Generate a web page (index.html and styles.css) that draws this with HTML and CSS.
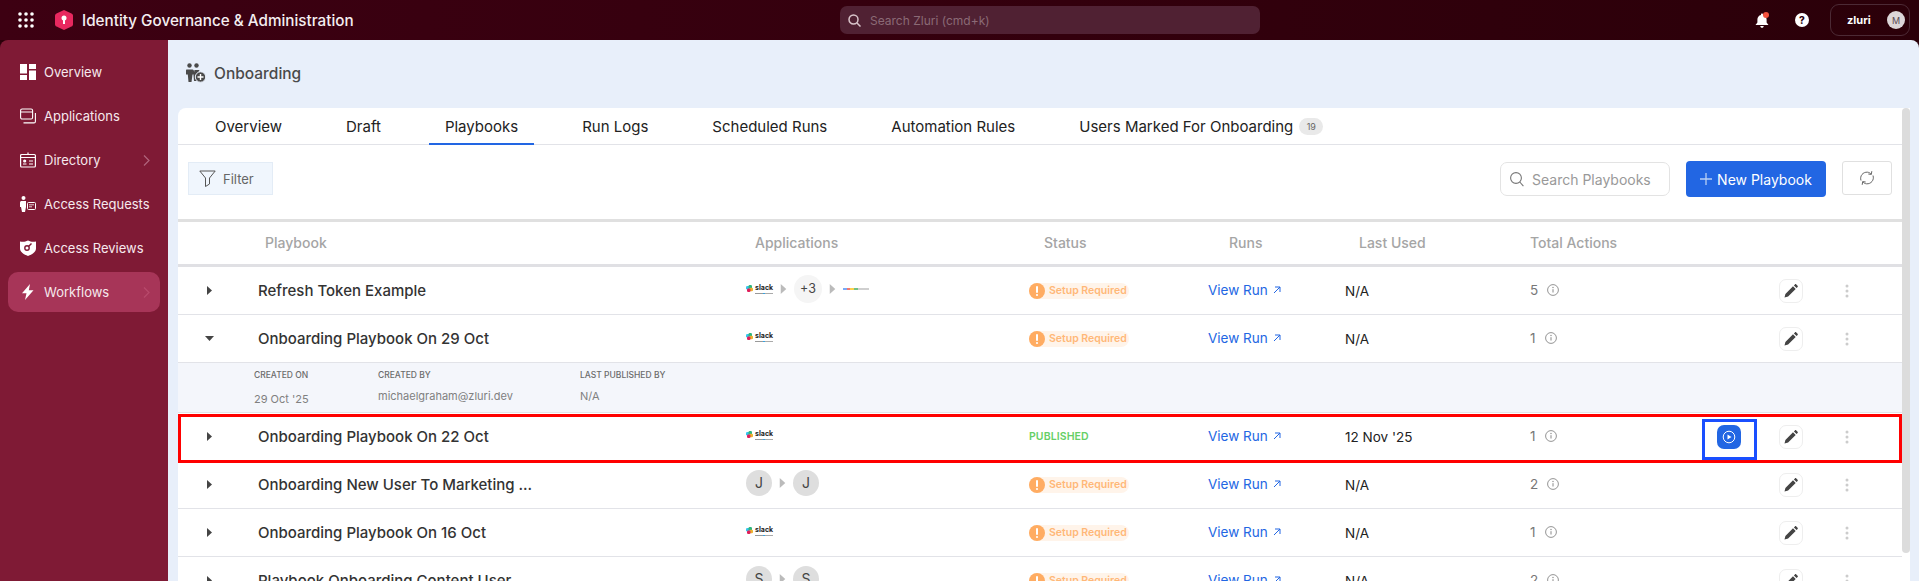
FILE: index.html
```html
<!DOCTYPE html>
<html lang="en">
<head>
<meta charset="utf-8">
<title>Onboarding</title>
<link rel="stylesheet" href="styles.css">
</head>
<body>
<svg class="sprite" aria-hidden="true">
  <symbol id="tri" viewBox="0 0 5 9"><path d="M0 0l5 4.500L0 9z"/></symbol>
  <symbol id="pencil" viewBox="0 0 16 16"><path d="M1.500 14.500l.9-3.600 7.600-7.600 2.700 2.700-7.600 7.600zM10.900 2.400l1-1c.4-.4 1-.4 1.400 0l1.300 1.300c.4.4.4 1 0 1.400l-1 1z" fill="#444"/></symbol>
  <symbol id="dots" viewBox="0 0 4 14"><circle cx="2" cy="2" r="1.500"/><circle cx="2" cy="7" r="1.500"/><circle cx="2" cy="12" r="1.500"/></symbol>
  <symbol id="info" viewBox="0 0 12 12"><circle cx="6" cy="6" r="5.400" fill="none" stroke="#888" stroke-width=".9"/><path d="M6 5.200v3.300" stroke="#888" stroke-width="1"/><circle cx="6" cy="3.500" r=".7" fill="#888"/></symbol>
  <symbol id="ext" viewBox="0 0 8 8"><path d="M1 7l6-6M2 1h5v5" fill="none" stroke="#2266e3" stroke-width="1"/></symbol>
  <symbol id="warn" viewBox="0 0 16 16"><circle cx="8" cy="8" r="8" fill="#ffac62"/><rect x="7" y="3" width="2" height="7" rx="1" fill="#fff"/><circle cx="8" cy="12" r="1.100" fill="#fff"/></symbol>
  <symbol id="pin" viewBox="0 0 7 7"><rect x="0" y="1" width="3.500" height="3.500" rx="1.200" fill="#36c5f0"/><rect x="2.500" y="0" width="3.500" height="3.500" rx="1.200" fill="#2eb67d"/><rect x="3.500" y="2.800" width="3.500" height="3.500" rx="1.200" fill="#ecb22e"/><rect x="1" y="3.500" width="3.500" height="3.500" rx="1.200" fill="#e01e5a"/></symbol>
</svg>

<header class="topbar">
  <svg class="apps-icon" width="16" height="16" viewBox="0 0 16 16" fill="#fff"><circle cx="2" cy="2" r="1.800"/><circle cx="8" cy="2" r="1.800"/><circle cx="14" cy="2" r="1.800"/><circle cx="2" cy="8" r="1.800"/><circle cx="8" cy="8" r="1.800"/><circle cx="14" cy="8" r="1.800"/><circle cx="2" cy="14" r="1.800"/><circle cx="8" cy="14" r="1.800"/><circle cx="14" cy="14" r="1.800"/></svg>
  <svg class="brand-icon" width="18" height="20" viewBox="0 0 18 20"><path d="M9 0l7.500 3.500c1 .5 1.500 1.200 1.500 2.300v8.400c0 1.100-.5 1.800-1.500 2.300L9 20l-7.500-3.500C.5 16 0 15.300 0 14.200V5.800C0 4.700.5 4 1.500 3.500z" fill="#e8285f"/><circle cx="9" cy="8" r="2.500" fill="#fff"/><rect x="8" y="9" width="2" height="5" fill="#fff"/></svg>
  <div class="brand-title">Identity Governance &amp; Administration</div>
  <div class="global-search">
    <svg width="13" height="13" viewBox="0 0 13 13" fill="none" stroke="#d9c5cb" stroke-width="1.500"><circle cx="5.500" cy="5.500" r="4.500"/><path d="M9 9l3.500 3.500"/></svg>
    <span>Search Zluri (cmd+k)</span>
  </div>
  <div class="top-actions">
    <div class="bell">
      <svg width="14" height="15" viewBox="0 0 14 15" fill="#fff"><path d="M7 .5c.6 0 1 .4 1 1v.4c2.300.5 3.600 2.300 3.600 4.600v3l1.900 2.500H.5l1.900-2.500v-3C2.400 4.200 3.700 2.400 6 1.900v-.4c0-.6.4-1 1-1zM5.300 13h3.400c0 1-.7 1.800-1.700 1.800S5.300 14 5.300 13z"/></svg>
      <i class="bell-dot"></i>
    </div>
    <div class="help">?</div>
    <div class="org">
      <span class="org-name">zluri</span>
      <span class="avatar">M</span>
    </div>
  </div>
</header>

<div class="shell">
  <nav class="sidebar">
    <a class="nav-item"><svg width="16" height="16" viewBox="0 0 16 16" fill="#fff"><rect x="0" y="0" width="7" height="9.500"/><rect x="0" y="11" width="7" height="5"/><rect x="9" y="0" width="7" height="5"/><rect x="9" y="6.500" width="7" height="9.500"/></svg><span>Overview</span></a>
    <a class="nav-item"><svg width="16" height="16" viewBox="0 0 16 16" fill="none" stroke="#fff" stroke-width="1.100"><rect x=".6" y="1" width="12" height="10" rx="1.500"/><path d="M.6 4h12M15.400 5v8.500c0 .8-.6 1.400-1.400 1.400H3.500"/></svg><span>Applications</span></a>
    <a class="nav-item"><svg width="16" height="16" viewBox="0 0 16 16" fill="none" stroke="#fff" stroke-width="1.200"><rect x=".6" y="2.500" width="14.800" height="12.500" rx="1"/><path d="M.6 5.500h14.800M8 .5v2M9 9h4M9 12h4M3 12h3.500"/><circle cx="4.700" cy="9" r="1" fill="#fff"/></svg><span>Directory</span><svg class="nav-chevron" width="7" height="11" viewBox="0 0 7 11" fill="none" stroke="#b0647c" stroke-width="1.200"><path d="M1 .5l5 5-5 5"/></svg></a>
    <a class="nav-item"><svg width="16" height="16" viewBox="0 0 16 16" fill="#fff"><circle cx="3.500" cy="2" r="2"/><path d="M1 5h5v6l-1 5H2l-1-5H0V7c0-1 .5-2 1-2z"/><rect x="7.500" y="6.500" width="8" height="7" rx="1" fill="none" stroke="#fff"/><path d="M9 8.800h5M9 10.800h3" stroke="#fff" stroke-width=".8"/></svg><span>Access Requests</span></a>
    <a class="nav-item"><svg width="16" height="16" viewBox="0 0 16 16"><path d="M0 1.500c3 .5 5 .5 8-1 3 1.500 5 1.500 8 1v7c0 3.500-4 6-8 7.500-4-1.500-8-4-8-7.500z" fill="#fff"/><circle cx="7" cy="8" r="2.200" fill="none" stroke="#7f1a35" stroke-width="1.400"/><path d="M8.500 6.500l3-3" stroke="#7f1a35" stroke-width="1.400"/></svg><span>Access Reviews</span></a>
    <a class="nav-item is-active"><svg width="16" height="16" viewBox="0 0 16 16" fill="#fff"><path d="M10 0L2 9.200h4.500L5 16l8.500-9.800H8.800z"/></svg><span>Workflows</span><svg class="nav-chevron" width="7" height="11" viewBox="0 0 7 11" fill="none" stroke="#b84a6c" stroke-width="1.200"><path d="M1 .5l5 5-5 5"/></svg></a>
  </nav>

  <main class="main">
    <div class="page-head">
      <svg width="20" height="20" viewBox="0 0 20 20" fill="#4a4a4a"><circle cx="3.500" cy="2.500" r="2.200"/><circle cx="10.500" cy="2.500" r="2.200"/><path d="M.5 6.500h6c1 0 1.500 1 1.500 2v3H6.500L5.500 19h-3l-.7-7.500H0v-3c0-1 0-2 .5-2z"/><path d="M8.500 7h5l-1 2-2 3 .5 6H8l-.5-6z"/><circle cx="14.500" cy="14" r="5.200" fill="#4a4a4a" stroke="#e8effa"/><path d="M14.500 11v6M11.500 14h6" stroke="#fff" stroke-width="1.400"/></svg>
      <h1>Onboarding</h1>
    </div>
    <div class="panel">
      <section class="card">
        <div class="tabs">
          <a class="tab">Overview</a>
          <a class="tab">Draft</a>
          <a class="tab is-current">Playbooks</a>
          <a class="tab">Run Logs</a>
          <a class="tab">Scheduled Runs</a>
          <a class="tab">Automation Rules</a>
          <a class="tab">Users Marked For Onboarding<span class="count">19</span></a>
        </div>
        <div class="toolbar">
          <button class="filter"><svg width="17" height="17" viewBox="0 0 17 17" fill="none" stroke="#555" stroke-width="1"><path d="M.8 1h15.400L10.500 8v6l-4 2.500V8z"/></svg>Filter</button>
          <div class="toolbar-right">
            <div class="search"><svg width="14" height="15" viewBox="0 0 14 15" fill="none" stroke="#777" stroke-width="1.100"><circle cx="6" cy="6" r="5.400"/><path d="M9.800 10l3.600 4.200"/></svg><span>Search Playbooks</span></div>
            <button class="primary"><svg width="12" height="12" viewBox="0 0 12 12" stroke="#b8cff5" stroke-width="1.300"><path d="M6 0v12M0 6h12"/></svg>New Playbook</button>
            <button class="refresh"><svg width="16" height="16" viewBox="0 0 16 16" fill="none" stroke="#666" stroke-width="1"><path d="M2 10.500C.5 6 4 1.800 8.500 2.200c1.600.2 2.800.8 3.700 2M14 5.500c1.500 4.500-2 8.700-6.500 8.300-1.600-.2-2.800-.8-3.700-2M12.800 1.200l-.5 3.200-3-.4M3.200 14.800l.5-3.200 3 .4"/></svg></button>
          </div>
        </div>

        <div class="head-row">
          <span></span><span>Playbook</span><span>Applications</span><span>Status</span><span>Runs</span><span>Last Used</span><span>Total Actions</span>
        </div>

        <div class="row">
          <svg class="caret"><use href="#tri"/></svg>
          <div class="title">Refresh Token Example</div>
          <div class="apps">
            <div class="slack"><svg width="7" height="7"><use href="#pin"/></svg><div class="slack-word"><span>slack</span><i></i></div></div>
            <svg class="flow"><use href="#tri"/></svg><span class="more">+3</span><svg class="flow"><use href="#tri"/></svg>
            <div class="gws"><i class="b"></i><i class="r"></i><i class="y"></i><i class="g"></i><i class="n"></i></div>
          </div>
          <div class="status"><svg width="16" height="16"><use href="#warn"/></svg><span>Setup Required</span></div>
          <a class="run">View Run<svg width="8" height="8"><use href="#ext"/></svg></a>
          <div class="used">N/A</div>
          <div class="total">5<svg width="12" height="12"><use href="#info"/></svg></div>
          <span></span>
          <div class="edit"><svg width="16" height="16"><use href="#pencil"/></svg></div>
          <svg class="more-dots"><use href="#dots"/></svg>
        </div>

        <div class="row">
          <svg class="caret caret-open"><use href="#tri"/></svg>
          <div class="title">Onboarding Playbook On 29 Oct</div>
          <div class="apps"><div class="slack"><svg width="7" height="7"><use href="#pin"/></svg><div class="slack-word"><span>slack</span><i></i></div></div></div>
          <div class="status"><svg width="16" height="16"><use href="#warn"/></svg><span>Setup Required</span></div>
          <a class="run">View Run<svg width="8" height="8"><use href="#ext"/></svg></a>
          <div class="used">N/A</div>
          <div class="total">1<svg width="12" height="12"><use href="#info"/></svg></div>
          <span></span>
          <div class="edit"><svg width="16" height="16"><use href="#pencil"/></svg></div>
          <svg class="more-dots"><use href="#dots"/></svg>
        </div>

        <div class="details">
          <div class="detail d1"><label>CREATED ON</label><span class="low">29 Oct '25</span></div>
          <div class="detail d2"><label>CREATED BY</label><span>michaelgraham@zluri.dev</span></div>
          <div class="detail"><label>LAST PUBLISHED BY</label><span>N/A</span></div>
        </div>

        <div class="row is-marked">
          <svg class="caret"><use href="#tri"/></svg>
          <div class="title">Onboarding Playbook On 22 Oct</div>
          <div class="apps"><div class="slack"><svg width="7" height="7"><use href="#pin"/></svg><div class="slack-word"><span>slack</span><i></i></div></div></div>
          <div class="published">PUBLISHED</div>
          <a class="run">View Run<svg width="8" height="8"><use href="#ext"/></svg></a>
          <div class="used">12 Nov '25</div>
          <div class="total">1<svg width="12" height="12"><use href="#info"/></svg></div>
          <div class="play-cell"><div class="play"><svg width="14" height="14" viewBox="0 0 14 14"><circle cx="7" cy="7" r="5.800" fill="none" stroke="#fff" stroke-width="1"/><path d="M5.500 4.500l4 2.500-4 2.500z" fill="#fff"/></svg></div></div>
          <div class="edit"><svg width="16" height="16"><use href="#pencil"/></svg></div>
          <svg class="more-dots"><use href="#dots"/></svg>
        </div>

        <div class="row">
          <svg class="caret"><use href="#tri"/></svg>
          <div class="title">Onboarding New User To Marketing ...</div>
          <div class="apps"><span class="initial">J</span><svg class="flow"><use href="#tri"/></svg><span class="initial">J</span></div>
          <div class="status"><svg width="16" height="16"><use href="#warn"/></svg><span>Setup Required</span></div>
          <a class="run">View Run<svg width="8" height="8"><use href="#ext"/></svg></a>
          <div class="used">N/A</div>
          <div class="total">2<svg width="12" height="12"><use href="#info"/></svg></div>
          <span></span>
          <div class="edit"><svg width="16" height="16"><use href="#pencil"/></svg></div>
          <svg class="more-dots"><use href="#dots"/></svg>
        </div>

        <div class="row">
          <svg class="caret"><use href="#tri"/></svg>
          <div class="title">Onboarding Playbook On 16 Oct</div>
          <div class="apps"><div class="slack"><svg width="7" height="7"><use href="#pin"/></svg><div class="slack-word"><span>slack</span><i></i></div></div></div>
          <div class="status"><svg width="16" height="16"><use href="#warn"/></svg><span>Setup Required</span></div>
          <a class="run">View Run<svg width="8" height="8"><use href="#ext"/></svg></a>
          <div class="used">N/A</div>
          <div class="total">1<svg width="12" height="12"><use href="#info"/></svg></div>
          <span></span>
          <div class="edit"><svg width="16" height="16"><use href="#pencil"/></svg></div>
          <svg class="more-dots"><use href="#dots"/></svg>
        </div>

        <div class="row">
          <svg class="caret"><use href="#tri"/></svg>
          <div class="title">Playbook Onboarding Content User</div>
          <div class="apps"><span class="initial">S</span><svg class="flow"><use href="#tri"/></svg><span class="initial">S</span></div>
          <div class="status"><svg width="16" height="16"><use href="#warn"/></svg><span>Setup Required</span></div>
          <a class="run">View Run<svg width="8" height="8"><use href="#ext"/></svg></a>
          <div class="used">N/A</div>
          <div class="total">2<svg width="12" height="12"><use href="#info"/></svg></div>
          <span></span>
          <div class="edit"><svg width="16" height="16"><use href="#pencil"/></svg></div>
          <svg class="more-dots"><use href="#dots"/></svg>
        </div>
      </section>
      <div class="track"><div class="thumb"></div></div>
    </div>
  </main>
</div>
</body>
</html>
```

FILE: styles.css
```css
* { box-sizing: border-box; }
html, body { margin: 0; height: 581px; overflow: hidden; }
body {
  font-family: Inter, "Noto Sans", sans-serif;
  color: #222;
  background: #2b0009;
  display: flex;
  flex-direction: column;
}
.sprite { display: none; }
button { font-family: inherit; cursor: pointer; }

.topbar {
  height: 40px;
  flex: none;
  display: flex;
  align-items: center;
  padding-left: 18px;
  background: linear-gradient(90deg, #3d0012, #2b0009);
}
.apps-icon { margin-right: 21px; }
.brand-icon { margin-right: 9px; }
.brand-title { width: 758px; font-size: 15.25px; font-weight: 500; color: #f4eef0; white-space: nowrap; }
.global-search {
  width: 420px;
  height: 28px;
  display: flex;
  align-items: center;
  gap: 9px;
  padding-left: 8px;
  border-radius: 7px;
  background: #502133;
  color: #8b6a76;
  font-size: 12px;
}
.top-actions { flex: 1; display: flex; align-items: center; padding-left: 495px; }
.bell { position: relative; width: 14px; height: 15px; display: flex; }
.bell-dot { position: absolute; left: 8px; top: -1px; width: 6px; height: 6px; border-radius: 50%; background: #f4533f; }
.help {
  width: 14px; height: 14px; margin-left: 26px; border-radius: 50%;
  background: #fff; color: #2b0009; font-size: 10px; font-weight: 800;
  display: flex; align-items: center; justify-content: center;
}
.org {
  width: 80px; height: 32px; margin-left: 21px;
  display: flex; align-items: center; justify-content: space-between;
  padding: 0 4px 0 16px;
  border: 1px solid #4c2a35; border-radius: 9px;
}
.org-name { color: #fff; font-size: 11px; font-weight: 700; }
.avatar {
  width: 18px; height: 18px; border-radius: 50%; background: #dcd6d8; color: #5a4a50;
  font-size: 9px; display: flex; align-items: center; justify-content: center;
}

.shell { flex: 1; display: flex; min-height: 0; }
.sidebar {
  width: 168px;
  flex: none;
  background: #7f1a35;
  border-top-left-radius: 8px;
  padding: 12px 8px 0;
  display: flex;
  flex-direction: column;
  gap: 4px;
}
.nav-item {
  height: 40px;
  display: flex;
  align-items: center;
  gap: 8px;
  padding-left: 12px;
  color: #f6e9ed;
  font-size: 13px;
  border-radius: 10px;
}
.nav-chevron { margin-left: auto; margin-right: 10px; }
.nav-item.is-active { background: #a73558; }

.main {
  flex: 1;
  min-width: 0;
  display: flex;
  flex-direction: column;
  background: #e8effa;
  padding: 0 9px 0 10px;
  border-top-right-radius: 8px;
}
.page-head { height: 68px; flex: none; display: flex; align-items: center; gap: 8px; padding: 0 0 2px 8px; color: #4a4a4a; }
.page-head h1 { margin: 0; font-size: 15.5px; font-weight: 500; }
.panel { flex: 1; min-height: 0; display: flex; }
.card { flex: 1; min-width: 0; background: #fff; border-top-left-radius: 8px; overflow: hidden; }
.track { width: 8px; flex: none; background: #fff; }
.thumb { height: 445px; background: #dcdcdc; border-radius: 4px; }

.tabs { height: 37px; display: flex; gap: 32px; padding-left: 21px; border-bottom: 1px solid #e2e3e8; }
.tab {
  height: 37px; padding: 0 16px; display: flex; align-items: center;
  font-size: 15px; color: #222; white-space: nowrap; position: relative;
}
.tab.is-current { border-bottom: 2px solid #2266e3; padding-top: 2px; }
.count {
  width: 24px; height: 17px; margin-left: 6px; border-radius: 9px; background: #e9e9e9;
  color: #666; font-size: 9px; display: flex; align-items: center; justify-content: center;
}

.toolbar { height: 74px; display: flex; align-items: flex-start; padding: 17px 10px 0; }
.filter {
  width: 85px; height: 33px; display: flex; align-items: center; gap: 7px; padding: 0 0 0 10px;
  background: #f0f6fd; border: 1px solid #e3ecf6; color: #666; font-size: 13px;
}
.toolbar-right { margin-left: auto; display: flex; gap: 16px; align-items: flex-start; }
.search {
  width: 170px; height: 34px; display: flex; align-items: center; gap: 8px; padding-left: 9px;
  border: 1px solid #e3e3e3; border-radius: 7px; color: #999; font-size: 14px; white-space: nowrap;
}
.primary {
  width: 140px; height: 36px; margin-top: -1px; display: flex; align-items: center; justify-content: center; gap: 5px;
  background: #2266e3; color: #fff; border: 0; border-radius: 4px; font-size: 14px;
}
.refresh {
  width: 50px; height: 34px; margin-top: -1px; display: flex; align-items: center; justify-content: center;
  background: #fff; border: 1px solid #e0e0e0; border-radius: 3px;
}

.head-row {
  height: 48px;
  display: grid;
  grid-template-columns: 87px 490px 289px 185px 130px 171px 1fr;
  align-items: center;
  padding-bottom: 2px;
  border-top: 3px solid #e0e0e0;
  border-bottom: 3px solid #e0e0e4;
  color: #a5a5a5;
  font-size: 14px;
  font-weight: 500;
}

.row {
  height: 48px;
  display: grid;
  grid-template-columns: 80px 488px 283px 179px 137px 185px 187px 62px 68px 1fr;
  align-items: center;
  border-bottom: 1px solid #e2e3e8;
  position: relative;
}
.caret { width: 5px; height: 9px; margin-left: 29px; fill: #444; }
.caret-open { transform: rotate(90deg); }
.title { font-size: 15px; font-weight: 500; color: #333; white-space: nowrap; }

.apps { display: flex; align-items: center; gap: 7px; margin-bottom: 4px; }
.slack { display: flex; align-items: flex-start; gap: 2px; }
.slack svg { margin-top: 1px; }
.slack-word { display: flex; flex-direction: column; width: 18px; }
.slack-word span { font-size: 7px; line-height: 8px; font-weight: 700; color: #222; }
.slack-word i { height: 1px; margin-top: 1px; background: linear-gradient(90deg, #999 45%, #36a2e0 45%, #36a2e0 58%, #aaa 58%); }
.flow { width: 7px; height: 10px; fill: #bbb; }
.more, .initial { display: flex; align-items: center; justify-content: center; border-radius: 50%; color: #444; }
.more { width: 28px; height: 28px; background: #f5f5f5; font-size: 12.5px; }
.initial { width: 26px; height: 26px; background: #dedede; font-size: 14px; }
.gws { display: flex; width: 26px; height: 2px; opacity: .7; }
.gws i { flex: 1; }
.gws .b { background: #4285f4; }
.gws .r { background: #ea4335; }
.gws .y { background: #fbbc05; }
.gws .g { background: #34a853; }
.gws .n { flex: 3; background: #bbb; }

.status {
  width: 100px; height: 16px; display: flex; align-items: center; gap: 4px;
  background: #fff4ea; border-radius: 8px; color: #ffb878; font-size: 10.5px; font-weight: 600; white-space: nowrap;
}
.published { font-size: 10.5px; font-weight: 600; color: #66cf66; letter-spacing: .1px; }
.run { display: flex; align-items: center; gap: 5px; color: #2266e3; font-size: 13.5px; margin-bottom: 2px; }
.used { font-size: 13.5px; color: #222; }
.total { display: flex; align-items: center; gap: 9px; color: #777; font-size: 13.5px; margin-bottom: 2px; }
.play-cell { height: 100%; display: flex; align-items: center; position: relative; }
.play {
  width: 24px; height: 24px; border-radius: 7px; background: #2266e3;
  display: flex; align-items: center; justify-content: center; position: relative;
}
.play::after {
  content: ""; position: absolute; left: -15px; top: -6px; width: 55px; height: 41px;
  border: 3px solid #1a4fff; box-sizing: border-box;
}
.edit {
  width: 24px; height: 24px; border: 1px solid #eee; border-radius: 7px;
  display: flex; align-items: center; justify-content: center;
}
.more-dots { width: 4px; height: 14px; fill: #ccc; margin-left: -2px; }

.is-marked::after {
  content: ""; position: absolute; inset: 1px 0 -3px 0;
  border: 3px solid #f00; pointer-events: none;
}

.details {
  height: 50px;
  display: flex;
  padding-left: 76px;
  background: #f4f6fb;
  border-bottom: 1px solid #e2e3e8;
  color: #777;
}
.detail { display: flex; flex-direction: column; gap: 8px; padding-top: 7px; }
.d1 { width: 124px; }
.d2 { width: 202px; }
.detail label { font-size: 8.5px; font-weight: 500; line-height: 11px; color: #6b6b6b; }
.detail span { font-size: 11px; line-height: 14px; color: #808080; }
.detail .low { margin-top: 3px; }
```
